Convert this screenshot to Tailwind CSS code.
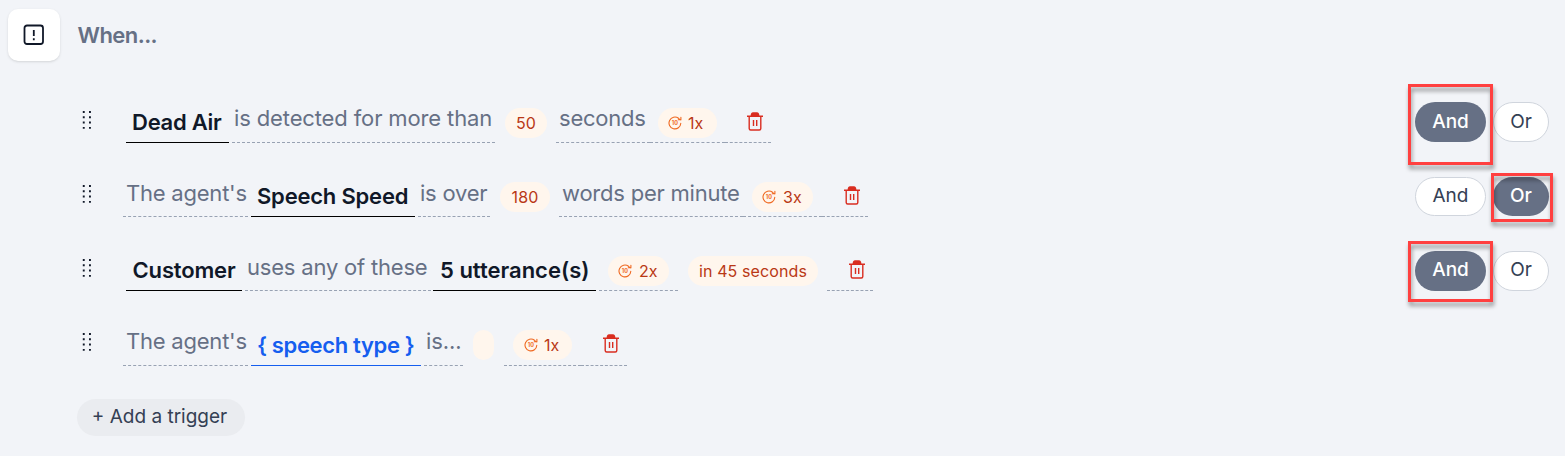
<!DOCTYPE html>
<html lang="en"><head><meta charset="utf-8"><title>Triggers</title>
<script src="https://cdn.jsdelivr.net/npm/@tailwindcss/browser@4"></script></head>
<body class="bg-[#f2f4f8] font-['Inter',sans-serif] text-[#667085] w-[1565px] h-[456px] overflow-hidden relative">
<svg class="hidden">
  <symbol id="grip" viewBox="0 0 10 18"><path fill="#101828" d="M.8 0h1.900v1.900H.8zM7 0h1.900v1.900H7zM.8 5.300h1.900v1.900H.8zM7 5.300h1.900v1.900H7zM.8 10.600h1.900v1.900H.8zM7 10.600h1.900v1.900H7zM.8 15.900h1.900v1.900H.8zM7 15.900h1.900v1.900H7z"/></symbol>
  <symbol id="trash" viewBox="0 0 16 19"><path fill="none" stroke="#d92d20" stroke-width="1.400" d="M2.200 4.500v12q0 1.500 1.500 1.500h8.600q1.500 0 1.500-1.500v-12"/><path fill="#d92d20" d="M0 3.600h3.600Q4 .3 6 .3h4q2 0 2.400 3.300H16V5H0z"/><path stroke="#d92d20" stroke-width="1.400" d="M6.500 8v6M9.700 8v6"/></symbol>
  <symbol id="again" viewBox="0 0 14 14"><path fill="none" stroke="#ef6820" stroke-width="1.100" stroke-linecap="round" d="M12.800 7.300a5.900 5.900 0 1 1-2.300-5M10.300 3.800h2.600V1.200M10.500 2.300l1.800 1.500"/><text x="6.900" y="9.100" text-anchor="middle" font-size="5.500" font-weight="700" fill="#ef6820">10</text></symbol>
</svg>
<header class="flex items-start h-[69px] pl-2 pt-[9px]">
  <div class="size-[52px] rounded-[10px] bg-white shadow-sm flex items-center justify-center"><svg class="size-[22px]" viewBox="0 0 22 22" fill="none" stroke="#101828" stroke-width="1.800"><rect x="1.500" y="1.500" width="18.500" height="18.500" rx="2.500"/><path d="M10.800 6v6M10.800 14.200v2"/></svg></div>
  <h1 class="ml-[17.5px] mt-[10px] text-[22px] leading-8 font-semibold tracking-[-0.55px]">When...</h1>
</header>
<main class="text-[22px] leading-7 whitespace-nowrap">
  <div class="flex items-end h-[74px] pl-[82px] pr-4">
    <svg class="w-[10px] h-[18px] mb-[14px] mr-[34px]"><use href="#grip"/></svg>
    <span class="w-[103px] border-b border-black pl-[6px] pb-[6px] font-semibold tracking-[-0.25px] text-[#101828]">Dead Air</span>
    <span class="ml-[3px] w-[263px] border-b border-dashed border-[#98a2b3] pl-[2px] pb-[10px] tracking-[-0.13px]">is detected for more than</span>
    <span class="ml-[10px] mb-[5px] w-[42px] h-[30px] rounded-full bg-[#fff6ed] text-[#b93815] text-base leading-[30px] text-center tracking-[0.2px]">50</span>
    <span class="ml-[9px] w-[94px] border-b border-dashed border-[#98a2b3] pl-[3px] pb-[10px] tracking-[-0.22px]">seconds</span>
    <span class="w-[75px] border-b border-dashed border-[#98a2b3] pl-[8px] pb-[4px]"><span class="flex items-center w-[59px] h-[30px] rounded-full bg-[#fff6ed] text-[#b93815] text-base pl-[10px]"><svg class="size-[14px] mr-[6px]"><use href="#again"/></svg>1x</span></span>
    <span class="w-[46px] border-b border-dashed border-[#98a2b3] pl-[21.5px] pb-[11px]"><svg class="w-4 h-[19px]"><use href="#trash"/></svg></span>
    <span class="ml-auto mb-[1px] w-[71px] h-10 rounded-full bg-[#667085] text-white text-[19px] leading-[39px] text-center font-medium">And</span>
    <span class="ml-[7px] mb-[1px] w-[56px] h-10 rounded-full bg-white border border-[#d0d5dd] text-[#344054] text-[19px] leading-[37px] text-center">Or</span>
  </div>
  <div class="flex items-end h-[74px] pl-[82px] pr-4">
    <svg class="w-[10px] h-[18px] mb-[14px] mr-[31px]"><use href="#grip"/></svg>
    <span class="w-[125px] border-b border-dashed border-[#98a2b3] pl-[3px] pb-[9px] tracking-[-0.22px]">The agent's</span>
    <span class="ml-[3px] w-[164px] border-b border-black pl-[6px] pb-[6px] font-semibold tracking-[-0.2px] text-[#101828]">Speech Speed</span>
    <span class="ml-[3px] w-[72px] border-b border-dashed border-[#98a2b3] pl-[2px] pb-[9px] tracking-[-0.22px]">is over</span>
    <span class="ml-[10px] mb-[5px] w-[50px] h-[30px] rounded-full bg-[#fff6ed] text-[#b93815] text-base leading-[30px] text-center tracking-[0.2px]">180</span>
    <span class="ml-[9px] w-[184px] border-b border-dashed border-[#98a2b3] pl-[3px] pb-[9px] tracking-[-0.22px]">words per minute</span>
    <span class="w-[79px] border-b border-dashed border-[#98a2b3] pl-[9px] pb-[4px]"><span class="flex items-center w-[61px] h-[30px] rounded-full bg-[#fff6ed] text-[#b93815] text-base pl-[10px]"><svg class="size-[14px] mr-[7px]"><use href="#again"/></svg>3x</span></span>
    <span class="w-[46px] border-b border-dashed border-[#98a2b3] pl-[21.5px] pb-[11px]"><svg class="w-4 h-[19px]"><use href="#trash"/></svg></span>
    <span class="ml-auto mb-[1px] w-[71px] h-[39px] rounded-full bg-white border border-[#d0d5dd] text-[#344054] text-[19px] leading-[35px] text-center">And</span>
    <span class="ml-[7px] mb-[1px] w-[56px] h-[39px] rounded-full bg-[#667085] text-white text-[19px] leading-[37px] text-center font-medium">Or</span>
  </div>
  <div class="flex items-end h-[74px] pl-[82px] pr-4">
    <svg class="w-[10px] h-[18px] mb-[14px] mr-[34px]"><use href="#grip"/></svg>
    <span class="w-[116px] border-b border-black pl-[6.5px] pb-[6px] font-semibold tracking-[-0.15px] text-[#101828]">Customer</span>
    <span class="ml-[3px] w-[186px] border-b border-dashed border-[#98a2b3] pl-[2px] pb-[9px] tracking-[-0.2px]">uses any of these</span>
    <span class="ml-[2px] w-[163px] border-b border-black pl-[7px] pb-[6px] font-semibold text-[#101828]">5 utterance(s)</span>
    <span class="ml-[3px] w-[79px] border-b border-dashed border-[#98a2b3] pl-[9px] pb-[4px]"><span class="flex items-center w-[61px] h-[30px] rounded-full bg-[#fff6ed] text-[#b93815] text-base pl-[10px]"><svg class="size-[14px] mr-[7px]"><use href="#again"/></svg>2x</span></span>
    <span class="ml-[10px] mb-[5px] w-[130px] h-[30px] rounded-full bg-[#fff6ed] text-[#b93815] text-base leading-[30px] text-center tracking-[0.1px]">in 45 seconds</span>
    <span class="ml-[9px] w-[46px] border-b border-dashed border-[#98a2b3] pl-[21.5px] pb-[11px]"><svg class="w-4 h-[19px]"><use href="#trash"/></svg></span>
    <span class="ml-auto w-[71px] h-10 rounded-full bg-[#667085] text-white text-[19px] leading-[38px] text-center font-medium">And</span>
    <span class="ml-[7px] w-[56px] h-10 rounded-full bg-white border border-[#d0d5dd] text-[#344054] text-[19px] leading-[36px] text-center">Or</span>
  </div>
  <div class="flex items-end h-[75px] pl-[82px] pr-4">
    <svg class="w-[10px] h-[18px] mb-[15px] mr-[31px]"><use href="#grip"/></svg>
    <span class="w-[125px] border-b border-dashed border-[#98a2b3] pl-[3px] pb-[10px] tracking-[-0.22px]">The agent's</span>
    <span class="ml-[3px] w-[170px] border-b border-[#155eef] pl-[6px] pb-[6px] font-semibold tracking-[-0.35px] text-[#155eef]">{ speech type }</span>
    <span class="ml-[3px] w-[39px] border-b border-dashed border-[#98a2b3] pl-[2px] pb-[10px] tracking-[-0.1px]">is...</span>
    <span class="ml-[10px] mb-[6px] w-[21px] h-[30px] rounded-full bg-[#fff6ed]"></span>
    <span class="ml-[10px] w-[77px] border-b border-dashed border-[#98a2b3] pl-[9px] pb-[5px]"><span class="flex items-center w-[59px] h-[30px] rounded-full bg-[#fff6ed] text-[#b93815] text-base pl-[11px]"><svg class="size-[14px] mr-[6px]"><use href="#again"/></svg>1x</span></span>
    <span class="w-[46px] border-b border-dashed border-[#98a2b3] pl-[21.5px] pb-[12px]"><svg class="w-4 h-[19px]"><use href="#trash"/></svg></span>
  </div>
  <button class="block ml-[77px] mt-[33px] w-[168px] h-[37px] rounded-full bg-[#eaecf0] text-[#344054] text-[19px] leading-[35px] pb-[2px] pr-[3px] text-center">+ Add a trigger</button>
</main>
<div class="absolute left-[1408px] top-[84px] w-[85px] h-[81px] border-3 border-[#ff4040] drop-shadow-[1px_4px_2px_rgba(0,0,0,0.4)]"></div>
<div class="absolute left-[1491px] top-[173px] w-[62px] h-[49px] border-3 border-[#ff4040] drop-shadow-[1px_4px_2px_rgba(0,0,0,0.4)]"></div>
<div class="absolute left-[1408px] top-[241px] w-[85px] h-[61px] border-3 border-[#ff4040] drop-shadow-[1px_4px_2px_rgba(0,0,0,0.4)]"></div>
</body></html>
